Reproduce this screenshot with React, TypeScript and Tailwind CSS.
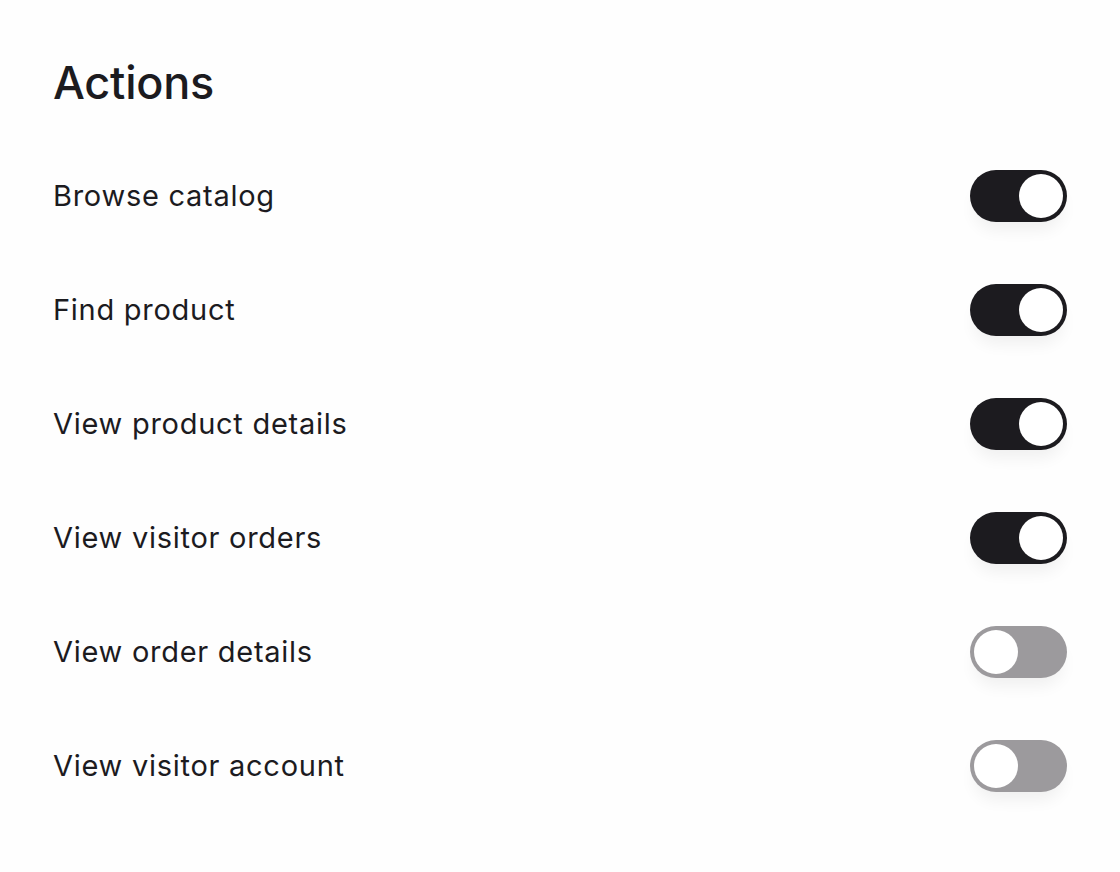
import { useState } from "react"

const actions = [
  { label: "Browse catalog", on: true },
  { label: "Find product", on: true },
  { label: "View product details", on: true },
  { label: "View visitor orders", on: true },
  { label: "View order details", on: false },
  { label: "View visitor account", on: false },
]

function Toggle({ on, onClick }: { on: boolean; onClick: () => void }) {
  return (
    <button
      onClick={onClick}
      className={`flex h-[52px] w-[97px] items-center rounded-full p-[4px] shadow-[0_12px_16px_-4px_rgba(0,0,0,0.06)] ${
        on ? "justify-end bg-[#1c1b1f]" : "justify-start bg-[#9c9a9d]"
      }`}
    >
      <span className="block h-[44px] w-[44px] rounded-full bg-white" />
    </button>
  )
}

export default function App() {
  const [items, setItems] = useState(actions)

  return (
    <main className="min-h-screen bg-[#fefefe] px-[53px] pt-[56px] font-['Inter',sans-serif] text-[#1c1b1f]">
      <h1 className="text-[45px] font-medium leading-[54px] tracking-[-0.005em]">Actions</h1>
      <div className="mt-[60px] flex flex-col gap-[62px]">
        {items.map((item, i) => (
          <div key={item.label} className="flex items-center justify-between">
            <span className="text-[29px] leading-[52px] tracking-[0.025em]">{item.label}</span>
            <Toggle
              on={item.on}
              onClick={() =>
                setItems(items.map((it, j) => (j === i ? { ...it, on: !it.on } : it)))
              }
            />
          </div>
        ))}
      </div>
    </main>
  )
}
